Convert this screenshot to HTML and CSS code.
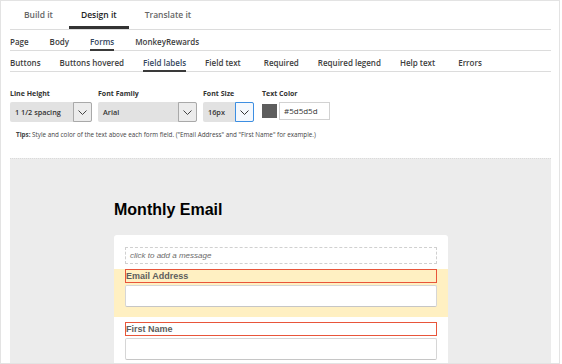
FILE: index.html
```html
<!DOCTYPE html>
<html lang="en">
<head>
    <meta charset="UTF-8">
    <meta name="viewport" content="width=device-width, initial-scale=1.0">
    <title>Design it - Forms</title>
    <link rel="stylesheet" href="styles.css">
</head>
<body>
    <div class="frame">
        <ul class="tabs main-tabs">
            <li>Build it</li>
            <li class="active">Design it</li>
            <li>Translate it</li>
        </ul>
        <ul class="tabs sub-tabs">
            <li>Page</li>
            <li>Body</li>
            <li class="active">Forms</li>
            <li>MonkeyRewards</li>
        </ul>
        <ul class="tabs sub-tabs">
            <li>Buttons</li>
            <li>Buttons hovered</li>
            <li class="active">Field labels</li>
            <li class="wide">Field text</li>
            <li>Required</li>
            <li>Required legend</li>
            <li class="wide">Help text</li>
            <li>Errors</li>
        </ul>

        <div class="settings">
            <div class="setting">
                <label>Line Height</label>
                <div class="select line-height">
                    <span class="value">1 1/2 spacing</span>
                    <span class="arrow"><svg width="9" height="5" viewBox="0 0 9 5"><polyline points="0.5,0.5 4.5,4.5 8.5,0.5" fill="none" stroke="#444" stroke-width="1"/></svg></span>
                </div>
            </div>
            <div class="setting">
                <label>Font Family</label>
                <div class="select font-family">
                    <span class="value">Arial</span>
                    <span class="arrow"><svg width="9" height="5" viewBox="0 0 9 5"><polyline points="0.5,0.5 4.5,4.5 8.5,0.5" fill="none" stroke="#444" stroke-width="1"/></svg></span>
                </div>
            </div>
            <div class="setting">
                <label>Font Size</label>
                <div class="select font-size">
                    <span class="value">16px</span>
                    <span class="arrow focused"><svg width="9" height="5" viewBox="0 0 9 5"><polyline points="0.5,0.5 4.5,4.5 8.5,0.5" fill="none" stroke="#333" stroke-width="1"/></svg></span>
                </div>
            </div>
            <div class="setting color-setting">
                <label>Text Color</label>
                <div class="color-picker">
                    <span class="swatch"></span>
                    <span class="color-input">#5d5d5d</span>
                </div>
            </div>
        </div>
        <p class="tips"><b>Tips:</b> Style and color of the text above each form field. ("Email Address" and "First Name" for example.)</p>

        <div class="preview">
            <div class="form-wrap">
                <h2>Monthly Email</h2>
                <div class="card">
                    <div class="message">click to add a message</div>
                    <div class="form-field selected">
                        <div class="field-label">Email Address</div>
                        <div class="field-input"></div>
                    </div>
                    <div class="form-field">
                        <div class="field-label">First Name</div>
                        <div class="field-input"></div>
                    </div>
                </div>
            </div>
        </div>
    </div>
</body>
</html>
```

FILE: styles.css
```css
body {
    margin: 0;
    font-family: "Open Sans", "Liberation Sans", sans-serif;
    background-color: white;
    color: #444;
    overflow: hidden;
}
.frame {
    width: 560px;
    height: 364px;
    box-sizing: border-box;
    border: 1px solid #e3e3e3;
    padding: 0 8px 0 9px;
    display: flex;
    flex-direction: column;
    overflow: hidden;
}
.tabs {
    list-style: none;
    margin: 0;
    padding: 0;
    display: flex;
    flex-shrink: 0;
    border-bottom: 1px solid #dcdcdc;
    font-size: 8px;
    font-weight: 600;
    line-height: 12px;
}
.main-tabs {
    height: 28px;
    padding-left: 2px;
    gap: 4px;
    font-size: 8.5px;
}
.main-tabs li {
    box-sizing: border-box;
    height: 28px;
    padding: 8px 12px 0;
    color: #666;
    border-bottom: 3px solid transparent;
}
.main-tabs li.active {
    color: #222;
    border-bottom-color: #333;
}
.sub-tabs {
    height: 20px;
    gap: 21px;
}
.sub-tabs + .sub-tabs {
    gap: 19px;
}
.sub-tabs li {
    box-sizing: border-box;
    height: 21px;
    margin-bottom: -1px;
    padding-top: 6px;
    color: #3d3d3d;
    border-bottom: 2px solid transparent;
}
.sub-tabs li.wide {
    margin-right: 4px;
}
.sub-tabs li.active {
    color: #34465e;
    border-bottom-color: #3a3a3a;
}
.settings {
    display: flex;
    gap: 6px;
    padding-top: 17px;
    flex-shrink: 0;
}
.setting label {
    display: block;
    height: 10px;
    margin-bottom: 3px;
    font-size: 7px;
    font-weight: 700;
    line-height: 10px;
    color: #333;
}
.select {
    display: flex;
    height: 20px;
    background-color: #e2e2e2;
    border-radius: 2px;
}
.select .value {
    flex: 1;
    padding-left: 5px;
    font-size: 7.3px;
    font-weight: 600;
    line-height: 20px;
    color: #333;
}
.select .arrow {
    box-sizing: border-box;
    width: 19px;
    display: flex;
    align-items: center;
    justify-content: center;
    background-color: #ececec;
    border: 1px solid #a9a9a9;
    border-radius: 0 2px 2px 0;
}
.select .arrow.focused {
    background-color: #f4f8fd;
    border-color: #3c8ee2;
}
.line-height {
    width: 82px;
}
.font-family {
    width: 99px;
}
.font-size {
    width: 51px;
}
.color-setting {
    margin-left: 2px;
}
.color-picker {
    display: flex;
    align-items: flex-start;
}
.swatch {
    width: 15px;
    height: 14px;
    margin-top: 2px;
    background-color: #5d5d5d;
}
.color-input {
    box-sizing: border-box;
    width: 51px;
    height: 18px;
    margin-left: 2px;
    padding-left: 4px;
    border: 1px solid #d2d2d2;
    font-size: 8px;
    line-height: 16px;
    color: #333;
}
.tips {
    margin: 9px 0 0 6px;
    height: 8px;
    font-size: 6.3px;
    line-height: 8px;
    color: #444;
    flex-shrink: 0;
}
.tips b {
    font-weight: 700;
}
.preview {
    flex: 1;
    margin-top: 19px;
    background-color: #ececec;
    border-top: 1px dotted #dadada;
    padding: 41px 0 0 104px;
}
.form-wrap {
    width: 334px;
    font-family: "Liberation Sans", Arial, sans-serif;
}
.form-wrap h2 {
    margin: 0 0 16px;
    font-size: 16px;
    line-height: 19px;
    color: #000;
}
.card {
    background-color: white;
    border-radius: 3px 3px 0 0;
    padding: 12px 11px 0;
    height: 200px;
}
.message {
    box-sizing: border-box;
    height: 17px;
    padding-left: 4px;
    border: 1px dashed #d0d0d0;
    font-size: 8px;
    font-style: italic;
    line-height: 15px;
    color: #6b6b6b;
}
.form-field {
    margin: 5px -11px 0;
    padding: 0 11px 10px;
}
.form-field.selected {
    background-color: #fff0c2;
}
.field-label {
    box-sizing: border-box;
    height: 14px;
    border: 1px solid #e8553a;
    font-size: 9px;
    font-weight: 700;
    line-height: 12px;
    color: #5d5d5d;
}
.field-input {
    box-sizing: border-box;
    height: 22px;
    margin-top: 2px;
    background-color: white;
    border: 1px solid #d6d6d6;
    border-bottom-color: #c6c6c6;
    border-radius: 2px;
}
```
